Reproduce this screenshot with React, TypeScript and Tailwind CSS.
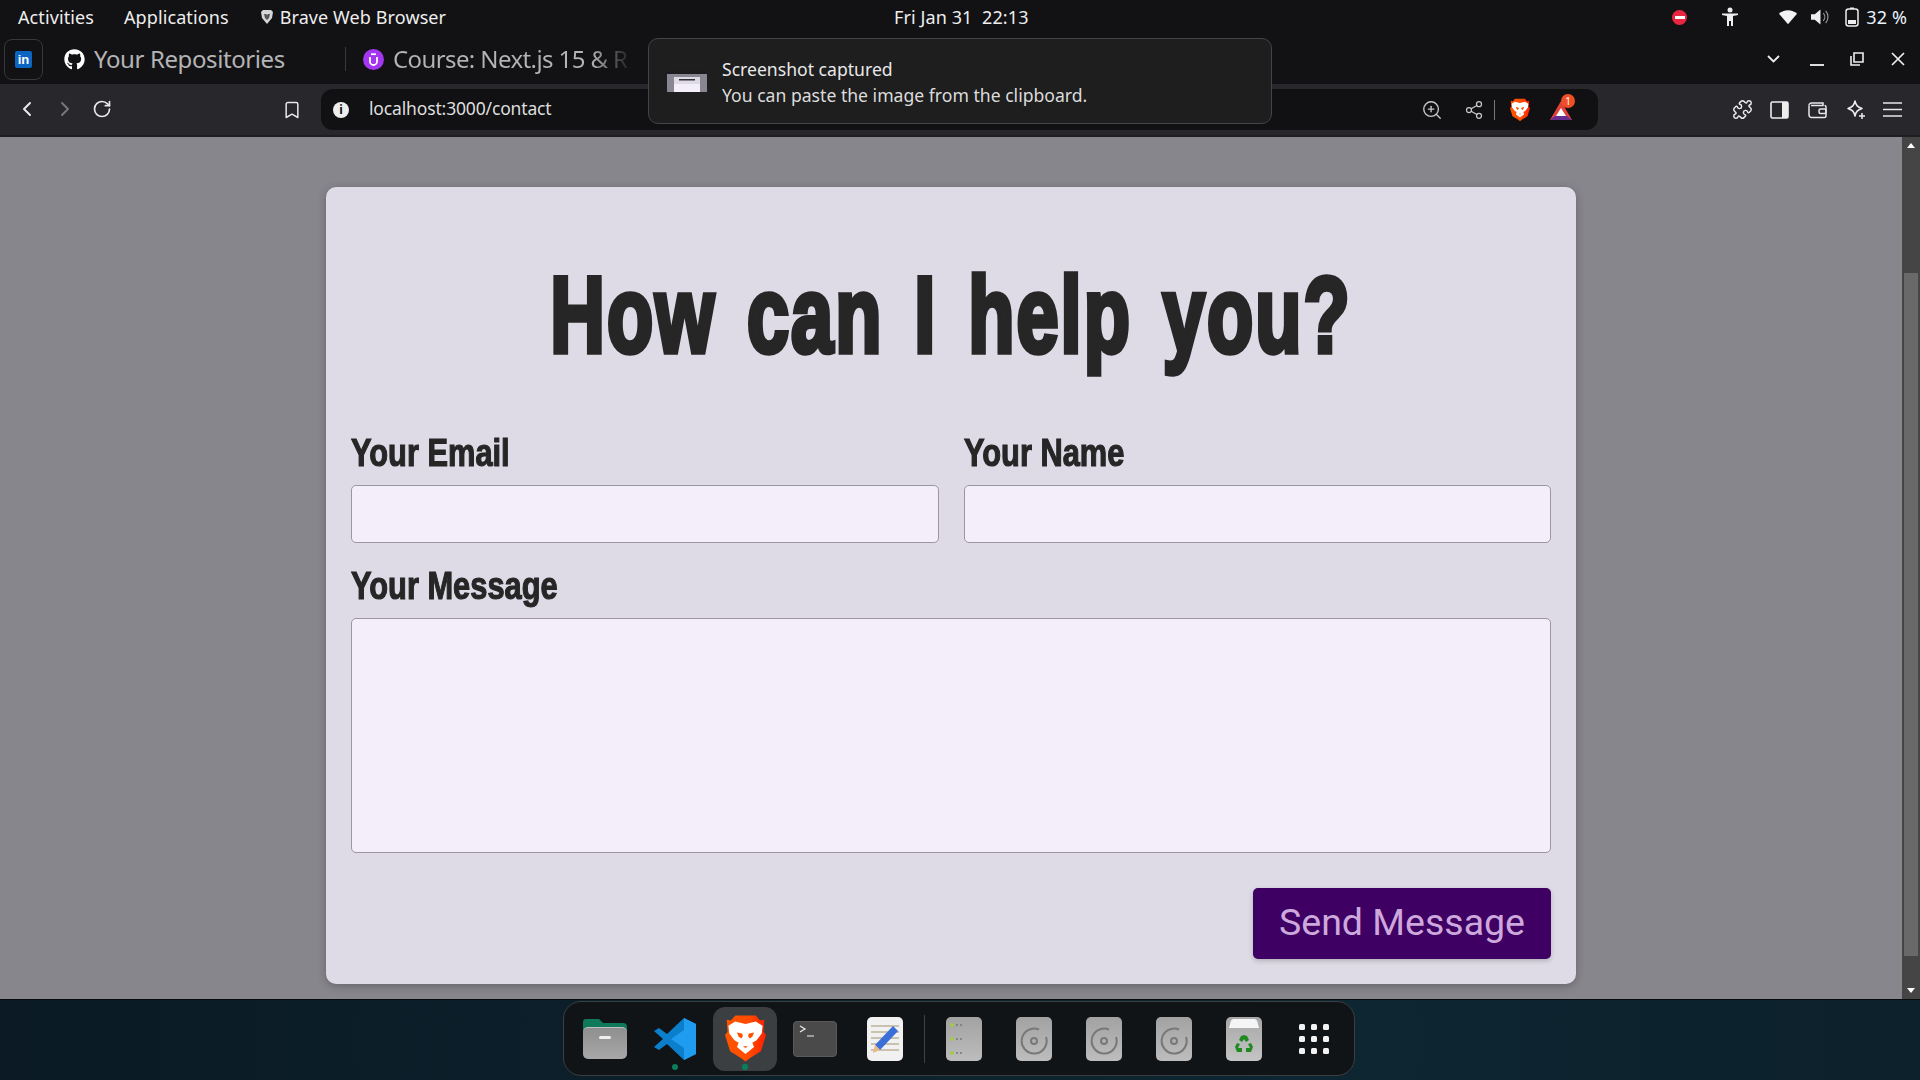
import React from "react";
import { FaGithub } from "react-icons/fa";
import { ChevronLeft, ChevronRight, RotateCw, Bookmark, ZoomIn, Share2, Puzzle } from "lucide-react";

function BraveLogo({ w, h, id }: { w: number; h: number; id: string }) {
  return (
    <svg width={w} height={h} viewBox="0 0 48 56">
      <defs>
        <linearGradient id={id} x1="0" y1="0" x2="1" y2="0">
          <stop offset="0" stopColor="#ff5500" />
          <stop offset="0.6" stopColor="#ff4a00" />
          <stop offset="1" stopColor="#ff2000" />
        </linearGradient>
      </defs>
      <path d="M12 1h24l5 6 5-1-1 14 3 4-6 19-13 8-5 4-5-4-13-8L0 24l3-4L2 6l5 1z" fill={`url(#${id})`} />
      <path d="M12 8l12 3 12-3 8 5-1 9-6 8-5 3 2 5-10 8-10-8 2-5-5-3-6-8-1-9z" fill="#fff" />
      <path d="M14 21l6 1 1 3-2 3-3-2zM34 21l-6 1-1 3 2 3 3-2zM21 37h6l-3 2z" fill="#ff5000" />
    </svg>
  );
}

function Tile({ children }: { children?: React.ReactNode }) {
  return (
    <div className="w-[36px] h-[44px] rounded-[5px] bg-gradient-to-b from-[#a2a2a2] to-[#bdbdbd] flex items-center justify-center">
      {children}
    </div>
  );
}

function DiscTile() {
  return (
    <Tile>
      <svg className="mt-[4px]" width="28" height="28" viewBox="0 0 28 28" fill="none" stroke="#787878" strokeWidth="2">
        <path d="M19 2.500a12.500 12.500 0 1 0 7 7.500" />
        <circle cx="14" cy="14" r="3" />
      </svg>
    </Tile>
  );
}

function DriveTile() {
  return (
    <div className="w-[36px] h-[44px] rounded-[5px] bg-gradient-to-b from-[#a2a2a2] to-[#bdbdbd] flex flex-col justify-between py-[6px] pl-[4px]">
      {[0, 1, 2].map((i) => (
        <div key={i} className="flex items-center gap-[2px]">
          <div className="w-[4px] h-[4px] rounded-full bg-[#a5c94a]" />
          <div className="w-[2px] h-[2px] rounded-full bg-[#777]" />
          <div className="w-[2px] h-[2px] rounded-full bg-[#777]" />
        </div>
      ))}
    </div>
  );
}

function Cell({ children, dot }: { children: React.ReactNode; dot?: boolean }) {
  return (
    <div className="relative w-[70px] h-full flex items-center justify-center">
      {children}
      {dot && <div className="absolute bottom-[5px] w-[6px] h-[6px] rounded-full bg-[#0a7d5a]" />}
    </div>
  );
}

export default function App() {
  const ui = "font-['Noto_Sans','Open_Sans',sans-serif]";
  const cond = "font-['Liberation_Sans',sans-serif] font-bold text-[#262626]";
  const label = `${cond} h-[44px] flex items-center text-[39px] origin-left scale-x-[0.79] whitespace-nowrap [-webkit-text-stroke:1.2px_#262626] mb-[10px]`;
  return (
    <div className={`relative w-[1920px] h-[1080px] overflow-hidden flex flex-col bg-[#121214] ${ui}`}>
      {/* system bar */}
      <div className="h-[34px] shrink-0 relative flex items-center text-[18px] tracking-[0.1px] text-[#eeeeee] pl-[18px]">
        <span>Activities</span>
        <span className="ml-[30px]">Applications</span>
        <svg className="ml-[31px]" width="14" height="16" viewBox="0 0 14 16">
          <path d="M3 1h8l2 2-1 6-5 6-5-6-1-6z" fill="#d5d5d5" />
          <path d="M4 5h2l1 1 1-1h2l-1 4-2 2-2-2z" fill="#555" />
        </svg>
        <span className="ml-[6px]">Brave Web Browser</span>
        <span className="absolute left-[894px] top-[4px]">Fri Jan 31&nbsp; 22:13</span>
        <div className="ml-auto flex items-center h-full">
          <div className="w-[15px] h-[15px] rounded-full bg-[#e8263f] flex items-center justify-center mr-[35px]">
            <div className="w-[10px] h-[3px] bg-white" />
          </div>
          <svg className="mr-[41px]" width="16" height="20" viewBox="0 0 16 20" fill="#eee">
            <circle cx="8" cy="3" r="2.5" />
            <path d="M0 6.5h16v1.6l-5 1V19H9v-5H7v5H5V9.100l-5-1z" />
          </svg>
          <svg className="mr-[14px]" width="18" height="16" viewBox="0 0 20 16" fill="#f2f2f2">
            <path d="M0 4.500C5 -0.800 15 -0.800 20 4.500L10 16z" />
          </svg>
          <svg className="mr-[16px]" width="18" height="18" viewBox="0 0 19 18" fill="none">
            <path d="M0 6h4l6-5v16l-6-5H0z" fill="#eee" />
            <path d="M13 5a6 6 0 0 1 0 8M15.500 2.500a10 10 0 0 1 0 13" stroke="#999" strokeWidth="1.200" />
          </svg>
          <svg className="mr-[7px]" width="14" height="20" viewBox="0 0 14 20" fill="none">
            <rect x="1" y="2" width="12" height="17" rx="2.500" stroke="#eee" strokeWidth="1.500" />
            <rect x="3" y="13" width="8" height="4" fill="#eee" />
            <rect x="5" y="0.500" width="4" height="1.500" fill="#eee" />
          </svg>
          <span className="mr-[13px] text-[#e8f2ff]">32 %</span>
        </div>
      </div>

      {/* tab strip */}
      <div className="h-[50px] shrink-0 flex items-center text-[#b4b4b6] text-[24px] tracking-[-0.4px]">
        <div className="ml-[4px] w-[39px] h-[41px] rounded-[8px] border border-[#38383c] flex items-center justify-center">
          <div className="w-[17px] h-[17px] rounded-[2px] bg-[#0a66c2] flex items-center justify-center text-white text-[13px] font-bold leading-none tracking-normal font-['Liberation_Sans',sans-serif]">
            in
          </div>
        </div>
        <FaGithub className="ml-[21px] text-white" size={21} />
        <span className="ml-[9px] w-[190px] whitespace-nowrap">Your Repositories</span>
        <div className="ml-[61px] w-px h-[24px] bg-[#3a3a3e]" />
        <div className="ml-[17px] w-[21px] h-[21px] rounded-full bg-[#a435f0] flex items-center justify-center">
          <svg width="9" height="13" viewBox="0 0 9 13" fill="none" stroke="#fff" strokeWidth="1.800">
            <path d="M1 4v4.500a3.500 3.500 0 0 0 7 0V4" />
            <path d="M2 1.200h5" />
          </svg>
        </div>
        <span className="ml-[9px] w-[234px] tracking-[-0.6px] overflow-hidden whitespace-nowrap bg-gradient-to-r from-[#b4b4b6] from-[85%] to-[#2a2a2c] bg-clip-text text-transparent">
          Course: Next.js 15 &amp; R
        </span>
        <div className="ml-auto flex items-center">
          <svg width="13" height="8" viewBox="0 0 13 8" fill="none" stroke="#eee" strokeWidth="1.800"><path d="M1 1l5.500 5.500L12 1" /></svg>
          <svg className="ml-[30px] mt-[12px]" width="14" height="2" viewBox="0 0 14 2"><rect width="14" height="2" fill="#ddd" /></svg>
          <svg className="ml-[26px] -mt-[1px]" width="14" height="14" viewBox="0 0 14 14" fill="none" stroke="#eee" strokeWidth="1.600">
            <path d="M4 1h9v9H4z" />
            <path d="M1 4v9h9" />
          </svg>
          <svg className="ml-[27px] mr-[15px]" width="14" height="14" viewBox="0 0 14 14" fill="none" stroke="#eee" strokeWidth="1.700"><path d="M1 1l12 12M13 1L1 13" /></svg>
        </div>
      </div>

      {/* toolbar */}
      <div className="h-[53px] shrink-0 bg-[#27272c] border-b-2 border-[#1f1f23] flex items-center text-[#e8e8e8]">
        <ChevronLeft className="ml-[15px] -mt-[2px]" size={24} strokeWidth={2} />
        <ChevronRight className="ml-[14px] -mt-[2px] text-[#77777b]" size={24} strokeWidth={2} />
        <RotateCw className="ml-[15px] -mt-[2px]" size={20} strokeWidth={2} />
        <Bookmark className="ml-[170px]" size={20} strokeWidth={1.800} />
        <div className="ml-[19px] w-[1277px] h-[41px] rounded-[12px] bg-[#111113] flex items-center">
          <div className="ml-[12px] w-[16px] h-[16px] rounded-full bg-[#eeeeee] flex items-center justify-center text-[#111] text-[12px] font-bold leading-none">
            i
          </div>
          <span className="ml-[20px] -mt-[2px] text-[17.5px] tracking-[-0.15px] text-[#dedede]">localhost:3000/contact</span>
          <ZoomIn className="ml-auto text-[#c8c8c8]" size={22} strokeWidth={1.500} />
          <Share2 className="ml-[21px] text-[#c8c8c8]" size={20} strokeWidth={1.500} />
          <div className="ml-[10px] w-px h-[20px] bg-[#77777b]" />
          <div className="ml-[15px] flex">
            <BraveLogo w={20} h={24} id="b1" />
          </div>
          <div className="relative ml-[20px] mr-[26px] w-[22px] h-[20px] mt-[2px]">
            <svg width="22" height="20" viewBox="0 0 22 20">
              <path d="M11 0L22 19H0z" fill="#e0413a" />
              <path d="M0 19l5-4h12l5 4z" fill="#662d91" />
              <path d="M11 7l5 8H6z" fill="#fff" />
            </svg>
            <div className="absolute -top-[7px] left-[11px] w-[14px] h-[14px] rounded-full bg-[#f04e23] text-white text-[10px] leading-[14px] text-center">1</div>
          </div>
        </div>
        <Puzzle className="ml-[134px]" size={21} strokeWidth={1.700} />
        <svg className="ml-[17px]" width="19" height="18" viewBox="0 0 19 18" fill="none">
          <rect x="1" y="1" width="17" height="16" rx="1.500" stroke="#eee" strokeWidth="1.600" />
          <rect x="12" y="1" width="6" height="16" fill="#eee" />
        </svg>
        <svg className="ml-[19px]" width="19" height="18" viewBox="0 0 19 18" fill="none" stroke="#e8e8e8" strokeWidth="1.500">
          <path d="M1 4.500A2.500 2.500 0 0 1 3.500 2H15v2.500H3" />
          <path d="M1 4.500V14a2.500 2.500 0 0 0 2.500 2.500h13a1.500 1.500 0 0 0 1.500-1.500V6a1.500 1.500 0 0 0-1.500-1.500" />
          <rect x="11" y="8" width="7" height="4.500" rx="1.500" />
        </svg>
        <svg className="ml-[19px]" width="19" height="20" viewBox="0 0 19 20" fill="none" stroke="#eee" strokeWidth="1.500">
          <path d="M9 1c1 4.500 2.500 6 7 7.500-4.500 1.500-6 3-7 7.500-1-4.500-2.500-6-7-7.500C6.500 7 8 5.500 9 1z" strokeLinejoin="round" />
          <path d="M16 13v6M13 16h6" />
        </svg>
        <svg className="ml-[18px]" width="19" height="15" viewBox="0 0 19 15" fill="none" stroke="#e8e8e8" strokeWidth="1.700">
          <path d="M0 1h19M0 7.500h19M0 14h19" />
        </svg>
      </div>

      {/* page */}
      <div className="flex-1 min-h-0 flex bg-[#88868d]">
        <div className="flex-1 flex justify-center items-start">
          <div className="w-[1250px] h-[797px] mt-[50px] rounded-[10px] bg-[#dedbe6] shadow-[0_2px_8px_rgba(0,0,0,0.25)] px-[25px] pt-[80px]">
            <h1 className={`${cond} text-center text-[108px] leading-[96px] tracking-[3px] [word-spacing:11px] whitespace-nowrap scale-x-[0.7] [-webkit-text-stroke:5.5px_#262626] mb-[68px]`}>
              How can I help you?
            </h1>
            <div className="grid grid-cols-2 gap-x-[25px]">
              <div>
                <div className={label}>Your Email</div>
                <div className="h-[58px] rounded-[5px] border border-[#9a97a3] bg-[#f4eefb]" />
              </div>
              <div>
                <div className={label}>Your Name</div>
                <div className="h-[58px] rounded-[5px] border border-[#9a97a3] bg-[#f4eefb]" />
              </div>
            </div>
            <div className={`${label} mt-[21px]`}>Your Message</div>
            <div className="h-[235px] rounded-[5px] border border-[#9a97a3] bg-[#f4eefb]" />
            <div className="flex justify-end mt-[35px]">
              <div className="w-[298px] h-[71px] pb-[2px] rounded-[5px] bg-[#3f0064] shadow-[0_2px_5px_rgba(0,0,0,0.2)] flex items-center justify-center text-[#cda8dc] text-[37.5px] font-['Roboto',sans-serif]">
                Send Message
              </div>
            </div>
          </div>
        </div>
        {/* scrollbar */}
        <div className="w-[18px] bg-[#454545] flex flex-col items-center relative">
          <div className="mt-[6px] w-0 h-0 border-x-[4px] border-x-transparent border-b-[5px] border-b-white" />
          <div className="mt-[125px] w-[14px] h-[683px] bg-[#696969]" />
          <div className="mt-auto mb-[6px] w-0 h-0 border-x-[4px] border-x-transparent border-t-[5px] border-t-white" />
        </div>
      </div>

      {/* dock */}
      <div className="h-[81px] shrink-0 border-t border-[#050a0d] bg-[radial-gradient(circle_at_70%_50%,#0d2631,#0b1a24)] pl-[563px] pt-[1px]">
        <div className="w-[792px] h-[75px] rounded-[18px] border border-[#3a3f42] bg-[#101417] flex items-center pl-[6px]">
          <Cell>
            <div className="relative w-[44px] h-[40px]">
              <svg className="absolute top-0 left-0" width="44" height="20" viewBox="0 0 44 20">
                <path d="M0 20V3a3 3 0 0 1 3-3h13l4 4h20a4 4 0 0 1 4 4v12z" fill="#0f7a5a" />
              </svg>
              <div className="absolute top-[8px] left-0 w-[44px] h-[32px] rounded-[5px] bg-gradient-to-b from-[#8f8f8f] to-[#a8a8a8] border-t border-[#c0c0c0] flex justify-center pt-[8px]">
                <div className="w-[12px] h-[3px] rounded-full bg-[#eee]" />
              </div>
            </div>
          </Cell>
          <Cell dot>
            <svg width="42" height="42" viewBox="0 0 42 42">
              <path d="M30 0l12 6v30l-12 6-17-16-8 6-5-3 9-8-9-8 5-3 8 6z" fill="#0b7fcc" />
              <path d="M30 0l12 6v30l-12 6V30L17 21 30 12z" fill="#1f9cf0" />
            </svg>
          </Cell>
          <Cell dot>
            <div className="absolute w-[64px] h-[64px] rounded-[12px] bg-[#3b3f42]" />
            <div className="relative flex">
              <BraveLogo w={41} h={49} id="b2" />
            </div>
            <div className="absolute bottom-[5px] w-[6px] h-[6px] rounded-full bg-[#0a7d5a]" />
          </Cell>
          <Cell>
            <div className="w-[44px] h-[36px] rounded-[4px] bg-[#4a4a4a] border border-[#5a5a5a] pl-[5px] pt-[3px]">
              <svg width="16" height="12" viewBox="0 0 16 12" fill="none" stroke="#eee" strokeWidth="1.200">
                <path d="M1 1l5 3-5 3M8 11h7" />
              </svg>
            </div>
          </Cell>
          <Cell>
            <div className="relative w-[36px] h-[44px] rounded-[5px] bg-[#f1f1f1] overflow-hidden flex flex-col gap-[4px] pt-[8px] px-[4px]">
              {[0, 1, 2, 3, 4].map((i) => (
                <div key={i} className="h-[2px] bg-[#c9c2ae]" />
              ))}
              <svg className="absolute left-[4px] top-[8px]" width="28" height="30" viewBox="0 0 28 30">
                <path d="M22 1l5 5L9 25l-5-5z" fill="#3a6fd8" />
                <path d="M4 20l5 5-7 3z" fill="#e8b983" />
              </svg>
            </div>
          </Cell>
          <div className="ml-[4px] mr-[4px] w-px h-[48px] bg-[#3d4245]" />
          <Cell><DriveTile /></Cell>
          <Cell><DiscTile /></Cell>
          <Cell><DiscTile /></Cell>
          <Cell><DiscTile /></Cell>
          <Cell>
            <div className="w-[36px] h-[44px] rounded-[5px] bg-gradient-to-b from-[#a8a8a8] to-[#c4c4c4] flex flex-col items-center pt-[2px]">
              <svg width="32" height="9" viewBox="0 0 32 9">
                <path d="M3 1.500l2-1.500h22l2 1.500 2 7.500H1z" fill="#f5f5f5" />
              </svg>
              <svg className="mt-[7px]" width="20" height="18" viewBox="0 0 20 18" fill="#1f8a20">
                <path d="M10 0l3 1 2 4-3 2-2-3-2 3-3-2 2-4zM1 12l2-4 3 1-2 4h4v4H3zM19 12l-2-4-3 1 2 4h-4v4h5z" />
              </svg>
            </div>
          </Cell>
          <Cell>
            <div className="grid grid-cols-3 gap-[6px]">
              {[0, 1, 2, 3, 4, 5, 6, 7, 8].map((i) => (
                <div key={i} className="w-[6px] h-[6px] rounded-[1.500px] bg-[#f2f2f2]" />
              ))}
            </div>
          </Cell>
        </div>
      </div>

      {/* notification */}
      <div className="absolute left-[648px] top-[38px] w-[624px] h-[86px] rounded-[10px] border border-[#444446] bg-[#1e1e1e] flex items-center">
        <svg className="ml-[18px]" width="40" height="21" viewBox="0 0 40 21">
          <rect width="40" height="21" fill="#888690" />
          <rect width="40" height="3" fill="#1c1c1e" />
          <rect x="7" y="6" width="26" height="15" fill="#dedbe6" />
          <rect x="12" y="8" width="16" height="1.500" fill="#333" />
          <rect x="7" y="13" width="26" height="8" fill="#f4eefb" />
        </svg>
        <div className="ml-[15px] pt-[2px] text-[17.6px] leading-[26px] text-[#e8e8e8]">
          <div>Screenshot captured</div>
          <div className="text-[#dcdcdc]">You can paste the image from the clipboard.</div>
        </div>
      </div>
    </div>
  );
}
